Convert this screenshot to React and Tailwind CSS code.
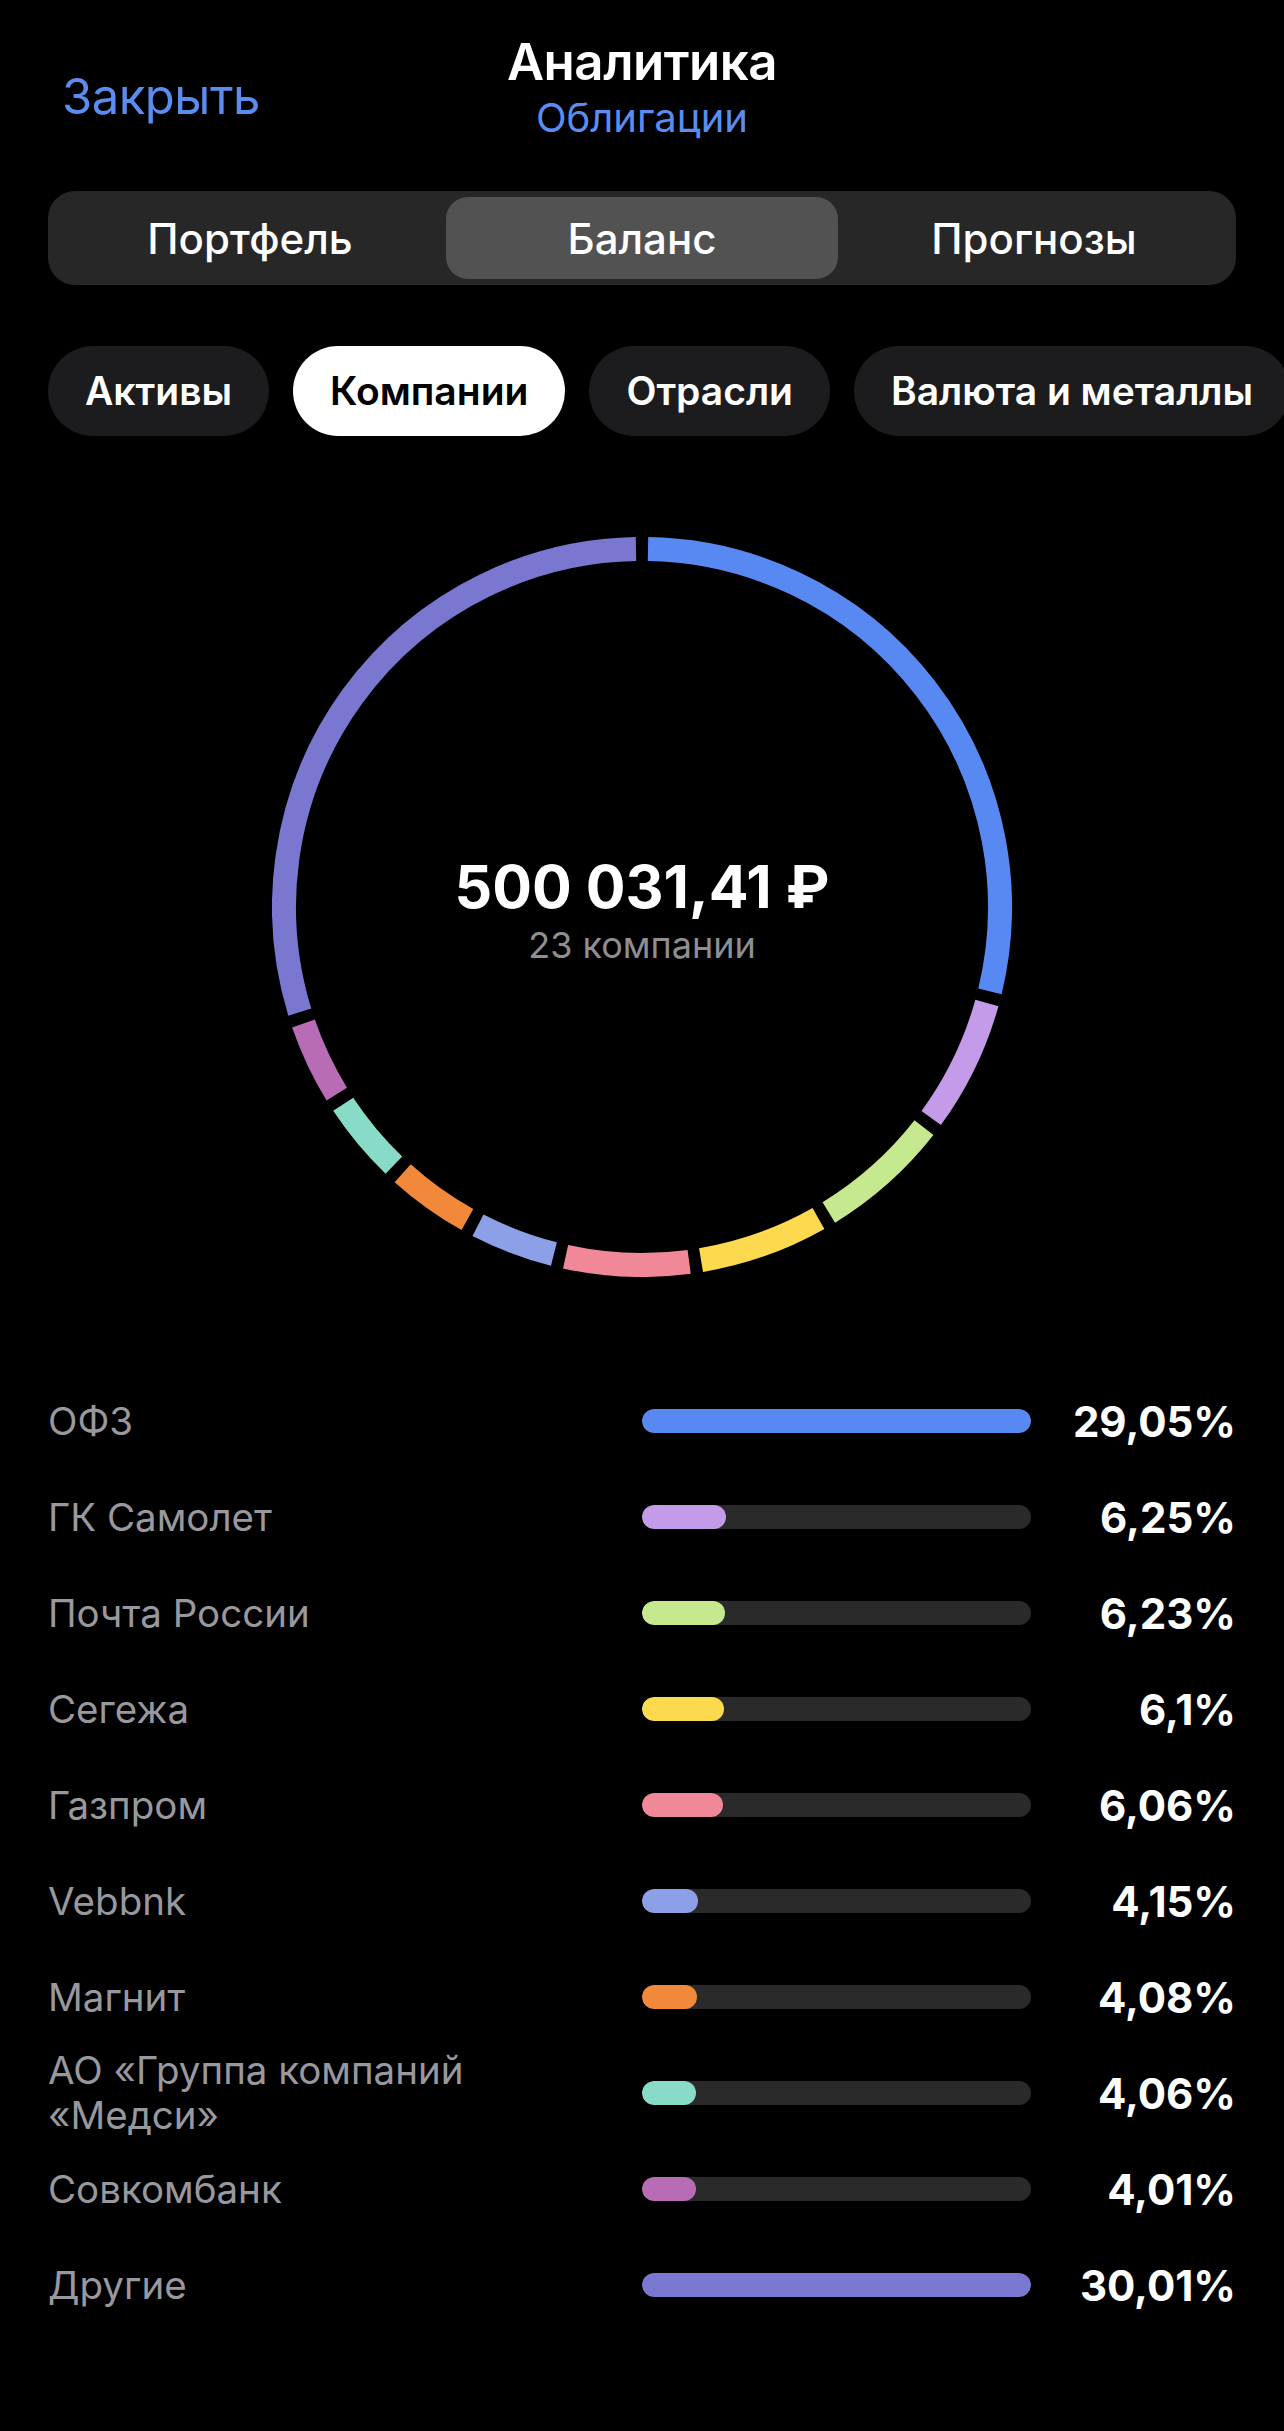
import React from "react";

const COMPANIES = [
  { name: "ОФЗ", pct: 29.05, color: "#5889F2" },
  { name: "ГК Самолет", pct: 6.25, color: "#C39BE8" },
  { name: "Почта России", pct: 6.23, color: "#C6E98F" },
  { name: "Сегежа", pct: 6.1, color: "#FCD94F" },
  { name: "Газпром", pct: 6.06, color: "#F08898" },
  { name: "Vebbnk", pct: 4.15, color: "#8CA0E8" },
  { name: "Магнит", pct: 4.08, color: "#F2893A" },
  { name: "АО «Группа компаний «Медси»", pct: 4.06, color: "#88DBC6" },
  { name: "Совкомбанк", pct: 4.01, color: "#B86CB6" },
  { name: "Другие", pct: 30.01, color: "#7A77D1" },
];

const TABS = ["Портфель", "Баланс", "Прогнозы"];
const CHIPS = ["Активы", "Компании", "Отрасли", "Валюта и металлы"];

const fmt = (n) => String(n).replace(".", ",") + "%";

// angles go clockwise from 12 o'clock
const arcPath = (c, r, a0, a1) => {
  const pt = (a) => [
    c + r * Math.sin((a * Math.PI) / 180),
    c - r * Math.cos((a * Math.PI) / 180),
  ];
  const [x0, y0] = pt(a0);
  const [x1, y1] = pt(a1);
  const large = a1 - a0 > 180 ? 1 : 0;
  return `M ${x0} ${y0} A ${r} ${r} 0 ${large} 1 ${x1} ${y1}`;
};

const Donut = () => {
  const size = 740;
  const c = size / 2;
  const r = 358;
  const gap = 0.96;
  let start = 0;

  return (
    <svg width={size} height={size} viewBox={`0 0 ${size} ${size}`}>
      {COMPANIES.map((item) => {
        const a0 = start;
        const a1 = start + (item.pct / 100) * 360;
        start = a1;
        return (
          <path
            key={item.name}
            d={arcPath(c, r, a0 + gap, a1 - gap)}
            stroke={item.color}
            strokeWidth={24}
            fill="none"
          />
        );
      })}
    </svg>
  );
};

const App = () => {
  const max = COMPANIES[0].pct;

  return (
    <div className="min-h-[2431px] w-full bg-black text-white font-[family-name:Inter,sans-serif] overflow-hidden">
      {/* HEADER */}
      <div className="px-[48px] pt-[31px] grid grid-cols-[1fr_auto_1fr] items-start">
        <button className="justify-self-start ml-[14px] mt-[35px] text-[49px] leading-[62px] text-[#5B8DF1] tracking-[-0.5px]">
          Закрыть
        </button>
        <div className="flex flex-col items-center">
          <p className="text-[51px] leading-[62px] font-semibold tracking-[-0.5px]">
            Аналитика
          </p>
          <p className="text-[40px] leading-[50px] text-[#5B8DF1]">
            Облигации
          </p>
        </div>
        <div />
      </div>

      {/* SEGMENTED */}
      <div className="mx-[48px] mt-[48px] h-[94px] rounded-[27px] bg-[#272727] p-[6px] grid grid-cols-3">
        {TABS.map((t) => (
          <div
            key={t}
            className={`flex items-center justify-center rounded-[22px] text-[42px] font-medium ${
              t === "Баланс" ? "bg-[#525252]" : ""
            }`}
          >
            {t}
          </div>
        ))}
      </div>

      {/* CHIPS */}
      <div className="mt-[61px] pl-[48px] flex gap-[24px] whitespace-nowrap">
        {CHIPS.map((c) => (
          <div
            key={c}
            className={`flex-none h-[90px] px-[37px] rounded-full flex items-center text-[39px] font-semibold ${
              c === "Компании" ? "bg-white text-black" : "bg-[#1C1C1E] text-white"
            }`}
          >
            {c}
          </div>
        ))}
      </div>

      {/* DONUT */}
      <div className="mt-[101px] flex justify-center">
        <div className="relative w-[740px] h-[740px]">
          <Donut />
          <div className="absolute inset-0 flex flex-col items-center justify-center pt-[6px]">
            <p className="text-[59px] leading-[70px] font-bold">500 031,41 ₽</p>
            <p className="text-[36px] leading-[46px] text-[#8E8E93]">23 компании</p>
          </div>
        </div>
      </div>

      {/* LIST */}
      <div className="mt-[96px] px-[48px]">
        {COMPANIES.map((item) => (
          <div key={item.name} className="h-[96px] flex items-center">
            <p className="flex-1 text-[38.5px] leading-[45px] text-[#98989E]">
              <span className="block max-w-[480px]">{item.name}</span>
            </p>
            <div className="w-[389px] h-[24px] rounded-full bg-[#2A2A2A] overflow-hidden">
              <div
                className="h-full rounded-full"
                style={{
                  width: `${Math.min(100, (item.pct / max) * 100)}%`,
                  backgroundColor: item.color,
                }}
              />
            </div>
            <p className="w-[205px] text-right text-[42px] font-bold">
              {fmt(item.pct)}
            </p>
          </div>
        ))}
      </div>
    </div>
  );
};

export default App;
